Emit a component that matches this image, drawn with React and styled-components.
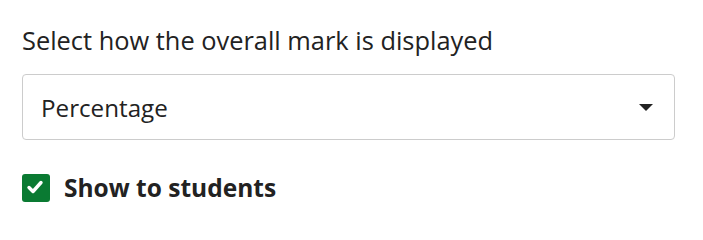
import styled, { createGlobalStyle } from "styled-components";

const Global = createGlobalStyle`
  body {
    margin: 0;
    background: #ffffff;
    font-family: "Open Sans", "Noto Sans", sans-serif;
    color: #222222;
  }
`;

const Form = styled.div`
  padding: 24px 22px 0 22px;
  width: 653px;
  display: flex;
  flex-direction: column;
`;

const Label = styled.label`
  font-size: 25.4px;
  line-height: 32px;
  color: #222222;
  margin-bottom: 18px;
`;

const SelectBox = styled.div`
  box-sizing: border-box;
  height: 66px;
  border: 1px solid #cccccc;
  border-radius: 4px;
  display: flex;
  align-items: center;
  justify-content: space-between;
  padding: 0 21px 0 18px;
  font-size: 24.2px;
  color: #222222;
`;

const Caret = styled.span`
  width: 0;
  height: 0;
  border-left: 7px solid transparent;
  border-right: 7px solid transparent;
  border-top: 7px solid #222222;
`;

const CheckRow = styled.div`
  display: flex;
  align-items: center;
  gap: 14px;
  margin-top: 34px;
`;

const Box = styled.span`
  flex: none;
  width: 28px;
  height: 28px;
  border-radius: 3px;
  background: ${(p) => (p.checked ? "#0a7a32" : "#ffffff")};
  display: flex;
`;

const CheckLabel = styled.span`
  font-size: 24.5px;
  line-height: 28px;
  font-weight: 700;
  color: #222222;
`;

export default function App() {
  return (
    <>
      <Global />
      <Form>
        <Label>Select how the overall mark is displayed</Label>
        <SelectBox>
          <span>Percentage</span>
          <Caret />
        </SelectBox>
        <CheckRow>
          <Box checked>
            <svg width="28" height="28" viewBox="0 0 28 28">
              <path
                d="M7 13.5 L11 17.5 L19 8.5"
                fill="none"
                stroke="#ffffff"
                strokeWidth="3.4"
                strokeLinecap="round"
                strokeLinejoin="round"
              />
            </svg>
          </Box>
          <CheckLabel>Show to students</CheckLabel>
        </CheckRow>
      </Form>
    </>
  );
}
